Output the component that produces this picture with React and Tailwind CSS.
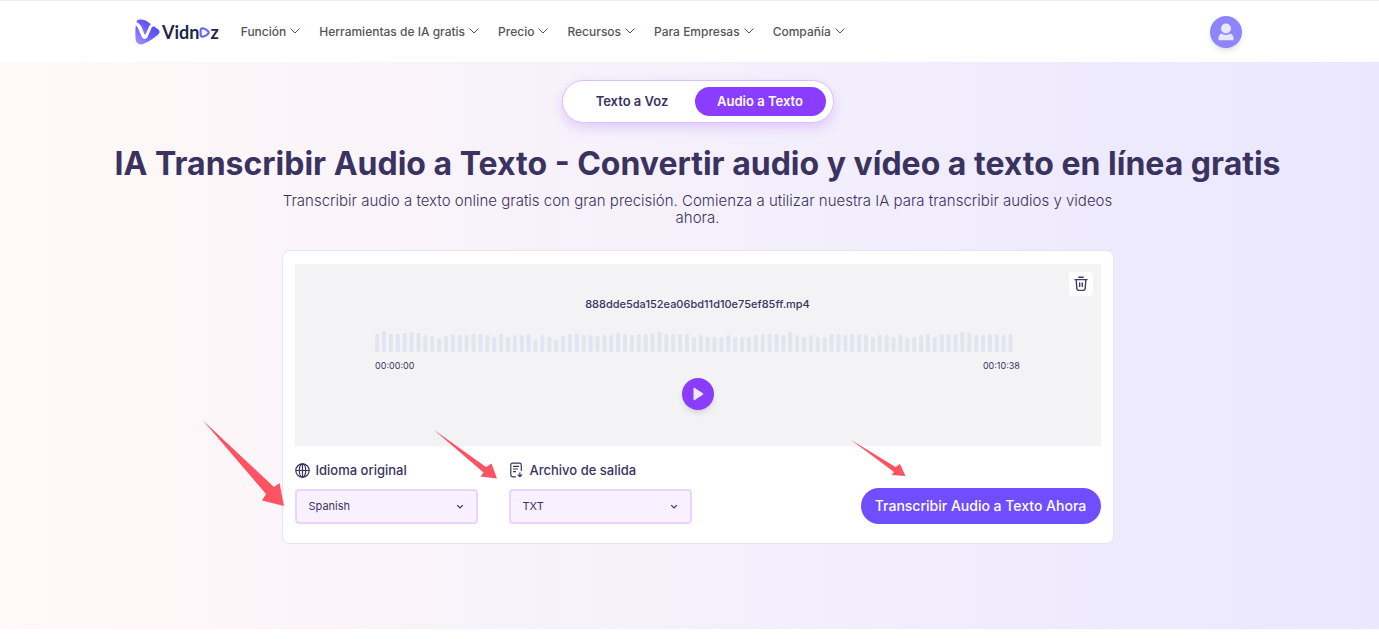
const navItems = [
  "Función",
  "Herramientas de IA gratis",
  "Precio",
  "Recursos",
  "Para Empresas",
  "Compañía",
];

const bars = [
  18, 21, 18, 18, 19, 20, 19, 17, 16, 14, 16, 18, 17, 17, 18, 18, 17, 15, 18,
  15, 17, 17, 18, 12, 17, 15, 12, 16, 18, 18, 17, 17, 16, 17, 17, 19, 18, 17,
  18, 18, 19, 20, 18, 18, 18, 18, 15, 17, 15, 15, 15, 17, 15, 15, 15, 17, 18,
  18, 18, 17, 20, 17, 15, 17, 15, 15, 18, 18, 17, 18, 18, 17, 15, 17, 17, 15,
  17, 14, 15, 17, 18, 15, 18, 18, 18, 20, 19, 17, 17, 18, 18, 17, 18,
];

const Logo = () => (
  <a href="#" aria-label="Vidnoz" className="flex items-center gap-0.5">
    <svg viewBox="0 0 25 26" width="25" height="26">
      <defs>
        <linearGradient id="mark" x1="0" y1="1" x2="1" y2="0">
          <stop offset="0" stopColor="#a79bff" />
          <stop offset="0.55" stopColor="#6a5cfa" />
          <stop offset="1" stopColor="#4f49f5" />
        </linearGradient>
      </defs>
      <path
        fill="url(#mark)"
        d="M2 1.500C3.500 0 7.500 .1 10 1.300C12 2.300 14.500 4 16 5.300C14.800 6 14.200 7 13.600 8.500L10.800 15C10.500 15.700 9.700 15.700 9.400 15L6.800 8.600C5.800 6.200 4.200 4.200 1.500 3.200Z"
      />
      <path
        fill="url(#mark)"
        d="M.8 6.500C2.200 7.200 2.900 8.600 3.600 10.400L6.800 18C8 20.500 11.300 20.500 12.500 18L16.300 9.300C17.100 7.500 18.500 6.900 19.900 7.900C22.500 9.600 25 11 24.500 13.500C24 16 13 23.500 7.500 25.200C3.500 26.200 .9 24 .6 20.500C.2 16 .3 10 .8 6.500Z"
      />
    </svg>
    <span className="flex items-center font-['Lato',sans-serif] text-lg leading-6 font-bold text-[#1f2746]">
      Vidn
      <svg viewBox="0 0 10 10" width="11" height="11" className="mt-0.5">
        <path
          d="M1.500 3C1.500 1.400 2.800 .9 4.200 1.400C5.800 2 7.300 2.900 8.300 3.900C9 4.600 9 5.400 8.300 6.100C7.300 7.100 5.800 8 4.200 8.600C2.800 9.100 1.500 8.600 1.500 7Z"
          fill="none"
          stroke="#6f63fb"
          strokeWidth="2"
          strokeLinejoin="round"
        />
      </svg>
      z
    </span>
  </a>
);

const Chevron = () => (
  <svg viewBox="0 0 10 6" width="10" height="6" className="mb-0.5">
    <path d="M0.500 0.500L5 5L9.500 0.500" fill="none" stroke="currentColor" />
  </svg>
);

const Header = () => (
  <header className="flex h-[62px] items-center border-t border-[#ecebfb] bg-white pr-[137px] pl-[135px]">
    <Logo />
    <nav className="ml-[22px] flex flex-1 items-center gap-[19px]">
      {navItems.map((item) => (
        <button
          key={item}
          className="flex items-center gap-1 whitespace-nowrap text-xs leading-5 font-medium text-[#555]">
          {item}
          <Chevron />
        </button>
      ))}
    </nav>
    <button
      aria-label="Cuenta"
      className="flex size-8 items-center justify-center rounded-full bg-[#8d85fd] shadow-md">
      <svg viewBox="0 0 16 18" width="16" height="18" fill="#e9e7ff">
        <circle cx="8" cy="5.500" r="5" />
        <path d="M3.500 10.500C6.500 12.500 9.500 12.500 12.500 10.500C14.800 11.500 15.600 13.500 15.600 16C15.600 17 15.200 17.300 14.500 17.300H1.500C.8 17.300 .4 17 .4 16C.4 13.500 1.200 11.500 3.500 10.500Z" />
      </svg>
    </button>
  </header>
);

const ModeSwitch = () => (
  <div className="flex rounded-full border border-[#d9c0fd] bg-white px-[7px] py-1.5 shadow-[0_5px_12px_rgba(139,61,255,0.2)]">
    <button className="h-[29px] w-[125px] rounded-full text-[13px] font-semibold text-[#3a3360]">
      Texto a Voz
    </button>
    <button className="h-[29px] w-[131px] rounded-full bg-[#8b3dff] text-[13px] font-semibold text-white">
      Audio a Texto
    </button>
  </div>
);

const Player = () => (
  <div className="relative flex flex-col items-center bg-[#f3f3f6] pt-8 pb-9">
    <button
      aria-label="Eliminar"
      className="absolute top-2 right-2 flex size-6 items-center justify-center rounded-sm bg-white text-[#3f3d63]">
      <svg
        viewBox="0 0 14 16"
        width="14"
        height="16"
        fill="none"
        stroke="currentColor"
        strokeWidth="1.400"
        strokeLinecap="round">
        <path d="M4.800 1.200H9.200M.9 3.600H13.100" />
        <path d="M2.200 3.800L2.800 12.600C2.900 13.800 3.600 14.400 4.700 14.400H9.300C10.400 14.400 11.100 13.800 11.200 12.600L11.800 3.800" />
        <path d="M5.700 7V10.400M8.300 7V10.400" />
      </svg>
    </button>
    <p className="text-[11px] leading-4 font-medium text-[#3a3360]">
      888dde5da152ea06bd11d10e75ef85ff.mp4
    </p>
    <div className="mt-[19px] w-4/5">
      <svg
        viewBox="0 0 644 21"
        className="block w-full"
        role="img"
        aria-label="Forma de onda">
        {bars.map((height, i) => (
          <rect
            key={i}
            x={i * 6.88}
            y={21 - height}
            width="4"
            height={height}
            rx="1.500"
            fill="#e2e4ef"
          />
        ))}
      </svg>
      <div className="mt-1.5 flex justify-between text-[9px] leading-4 text-[#3a3360]">
        <span>00:00:00</span>
        <span>00:10:38</span>
      </div>
    </div>
    <button
      aria-label="Reproducir"
      className="mt-1 flex size-8 items-center justify-center rounded-full bg-[#8b3dff] shadow-md">
      <svg viewBox="0 0 12 14" width="12" height="14" fill="#efe9fb">
        <path d="M1.500 1.700C1.500 .8 2.200 .6 2.900 1L10.800 6.200C11.500 6.700 11.500 7.300 10.800 7.800L2.900 13C2.200 13.400 1.500 13.200 1.500 12.300Z" />
      </svg>
    </button>
  </div>
);

const Field = ({ id, label, icon, options }) => (
  <div className="w-[183px]">
    <label
      htmlFor={id}
      className="flex items-center gap-1.5 text-[13px] leading-5 font-medium text-[#3a3360]">
      {icon}
      {label}
    </label>
    <div className="relative mt-[9px]">
      <select
        id={id}
        className="block h-[35px] w-full appearance-none rounded-sm border-2 border-[#e9d5fd] bg-[#f9f1ff] px-3 text-[11px] text-[#3a3360]">
        {options.map((option) => (
          <option key={option}>{option}</option>
        ))}
      </select>
      <svg
        viewBox="0 0 8 6"
        width="8"
        height="6"
        className="pointer-events-none absolute top-[15px] right-3.5">
        <path
          d="M1.200 1.200L4 4L6.800 1.200"
          fill="none"
          stroke="#3a3360"
          strokeWidth="1.200"
        />
      </svg>
    </div>
  </div>
);

const GlobeIcon = () => (
  <svg
    viewBox="0 0 15 15"
    width="15"
    height="15"
    fill="none"
    stroke="currentColor"
    strokeWidth="1.200">
    <circle cx="7.500" cy="7.500" r="6.700" />
    <ellipse cx="7.500" cy="7.500" rx="3.200" ry="6.700" />
    <path d="M.8 7.500H14.200M7.500 .8V14.200" />
  </svg>
);

const FileIcon = () => (
  <svg
    viewBox="0 0 15 16"
    width="15"
    height="16"
    fill="none"
    stroke="currentColor"
    strokeWidth="1.200"
    strokeLinecap="round"
    strokeLinejoin="round">
    <path d="M6.500 14.800H4.200Q1.800 14.800 1.800 12.500V3Q1.800 1.200 3.600 1.200H10.500Q12.300 1.200 12.300 3V8.500" />
    <path d="M4.500 4.300H9.700M4.500 7H8.500M4.500 9.700H6.500M10.900 10.800V14.500M9 12.900L10.900 14.700L12.800 12.900" />
  </svg>
);

// Red pointers over the form, placed from the card's corner
const Arrows = () => (
  <div className="pointer-events-none" aria-hidden="true">
    <svg
      viewBox="0 0 82 86"
      width="82"
      height="86"
      fill="#ff5263"
      className="absolute top-[169px] -left-[81px]">
      <path d="M1 0.500L72 67L77.500 63L82 86L60 80.500L64 74Z" />
    </svg>
    <svg
      viewBox="0 0 65 50"
      width="65"
      height="50"
      fill="#ff5263"
      className="absolute top-[178px] left-[150px]">
      <path d="M0.500 0.500L53 38L58.500 34.500L64 49.500L47.500 47.500L50.500 43.500Z" />
    </svg>
    <svg
      viewBox="0 0 56 38"
      width="56"
      height="38"
      fill="#ff5263"
      className="absolute top-[188px] left-[567px]">
      <path d="M0.500 0.500L45.500 28L50 25L55.500 37L41.500 36L44 33Z" />
    </svg>
  </div>
);

const App = () => {
  return (
    <div className="bg-white pb-2.5 font-['Inter',sans-serif]">
      <Header />
      <main className="flex flex-col items-center bg-linear-to-r from-[#fff9f7] via-[#f5f0fb] to-[#eae7ff] pt-[18px] pb-[85px] pl-4">
        <ModeSwitch />
        <h1 className="mt-[21px] whitespace-nowrap text-[32px] leading-10 font-bold text-[#3a3360]">
          IA Transcribir Audio a Texto - Convertir audio y vídeo a texto en
          línea gratis
        </h1>
        <p className="mt-2 max-w-[832px] text-center text-[15px] leading-[17px] font-light text-[#3a3360]">
          Transcribir audio a texto online gratis con gran precisión. Comienza a
          utilizar nuestra IA para transcribir audios y videos ahora.
        </p>
        <section className="relative mt-6 w-full max-w-[832px] rounded-lg border border-[#e6e4ec] bg-white px-3 pt-[13px] pb-[19px]">
          <Player />
          <div className="mt-3.5 flex items-end">
            <Field
              id="idioma"
              label="Idioma original"
              icon={<GlobeIcon />}
              options={["Spanish"]}
            />
            <div className="ml-[31px]">
              <Field
                id="salida"
                label="Archivo de salida"
                icon={<FileIcon />}
                options={["TXT"]}
              />
            </div>
            <button className="ml-auto h-9 w-60 rounded-full bg-[#704dff] text-sm font-medium whitespace-nowrap text-white">
              Transcribir Audio a Texto Ahora
            </button>
          </div>
          <Arrows />
        </section>
      </main>
    </div>
  );
};

export default App;
